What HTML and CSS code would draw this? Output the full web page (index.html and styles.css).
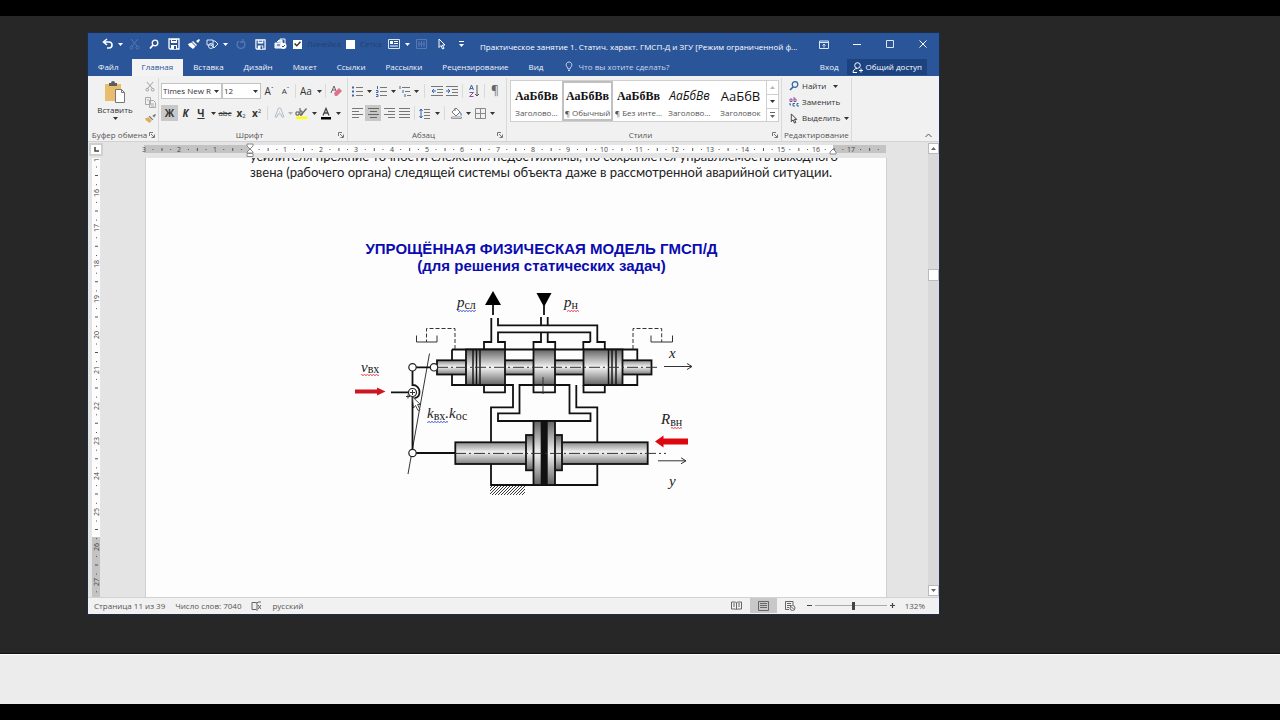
FILE: index.html
```html
<!DOCTYPE html>
<html lang="ru">
<head>
<meta charset="utf-8">
<title>Практическое занятие 1</title>
<link rel="stylesheet" href="styles.css">
</head>
<body>
<svg class="defs" aria-hidden="true">
  <symbol id="caret" viewBox="0 0 5 3"><path d="M0 0h5L2.500 3z" fill="currentColor"/></symbol>
  <symbol id="save" viewBox="0 0 12 12"><path d="M1 1h10v10H2L1 10z" fill="none" stroke="currentColor" stroke-width="1.300"/><path d="M3 1h6v4H3zM3 7h6v4H3z" fill="currentColor"/><path d="M4 2h4v1H4zM6 8h2v3H6z" fill="#2b5599"/></symbol>
  <symbol id="brush" viewBox="0 0 12 12"><path d="M8 3l3-2 1 1-2 3z" fill="currentColor"/><path d="M5 3l4 4-1 1-4-4z" fill="currentColor"/><path d="M3.500 4.500l4 4L5 11 1 8 0 6z" fill="var(--bristle, currentColor)"/></symbol>
  <symbol id="launcher" viewBox="0 0 6 6"><path d="M.5 4V.5H4M2 2l3 3M5.500 2.500v3h-3" fill="none" stroke="#777"/></symbol>
  <symbol id="pointer" viewBox="0 0 8 12"><path d="M1 1v8.500l2-2 1.500 3.500 1.500-.7L4.500 7H7z" fill="var(--fill, none)" stroke="currentColor"/></symbol>
</svg>

<main class="desktop">
<section class="window">

<header class="titlebar">
  <div class="quick">
    <button aria-label="Отменить"><svg width="12" height="12" viewBox="0 0 12 12"><path d="M5 1L1.500 4 5 7M2 4h5a3 3 0 0 1 0 6H5" fill="none" stroke="#fff" stroke-width="1.600"/></svg></button>
    <button aria-label="Список отмен"><svg class="caret"><use href="#caret"/></svg></button>
    <button class="faint" aria-label="Вырезать"><svg width="11" height="12" viewBox="0 0 11 12"><path d="M2 1l6 7M9 1L3 8" fill="none" stroke="currentColor"/><circle cx="2.500" cy="9.500" r="1.500" fill="none" stroke="currentColor"/><circle cx="8.500" cy="9.500" r="1.500" fill="none" stroke="currentColor"/></svg></button>
    <button aria-label="Найти"><svg width="10" height="11" viewBox="0 0 10 11"><circle cx="6" cy="4" r="2.800" fill="none" stroke="#fff" stroke-width="1.300"/><path d="M4 6L1 9.500" stroke="#fff" stroke-width="1.800"/></svg></button>
    <button aria-label="Сохранить как"><svg width="12" height="12"><use href="#save"/></svg></button>
    <button aria-label="Формат по образцу"><svg width="12" height="12"><use href="#brush"/></svg></button>
    <button aria-label="Фигуры"><svg width="13" height="12" viewBox="0 0 13 12"><path d="M1 2h6v5H1zM7 3h2l3 3-4 4-3-3" fill="none" stroke="#dbe4f2"/><circle cx="5" cy="8" r="2.500" fill="none" stroke="#dbe4f2"/></svg></button>
    <button aria-label="Список фигур"><svg class="caret"><use href="#caret"/></svg></button>
    <button class="faint" aria-label="Повторить"><svg width="11" height="11" viewBox="0 0 11 11"><path d="M8 2a4 4 0 1 1-4 0M8 0v3H5" fill="none" stroke="currentColor" stroke-width="1.300"/></svg></button>
    <button aria-label="Сохранить"><svg width="11" height="11"><use href="#save"/></svg></button>
    <button aria-label="Печать"><svg width="13" height="12" viewBox="0 0 13 12"><path d="M3 4l2-2h3v3M1 5h8v5H1z" fill="#dbe4f2" stroke="#fff"/><path d="M6 1h5v5" fill="none" stroke="#fff"/><circle cx="9.500" cy="8" r="3" fill="#fff"/><path d="M8 8l1 1 2-2M3 7h3" fill="none" stroke="#2b5599"/></svg></button>
    <label><input type="checkbox" checked>Линейка</label>
    <label><input type="checkbox">Сетка</label>
    <button aria-label="Форма"><svg width="12" height="10" viewBox="0 0 12 10"><path d="M.5.5h11v9H.5z" fill="none" stroke="#dbe4f2"/><path d="M2 2h3v3H2z" fill="#fff"/><path d="M6 2.500h4M6 4.500h4M2 7h8" stroke="#fff"/></svg></button>
    <button aria-label="Список форм"><svg class="caret"><use href="#caret"/></svg></button>
    <button class="faint" aria-label="Таблица"><svg width="11" height="10" viewBox="0 0 11 10"><path d="M.5.5h10v9H.5zM3 2v6M5.500 2v6M8 2v6M2 5h7" fill="none" stroke="currentColor"/></svg></button>
    <button aria-label="Выбор объектов"><svg width="8" height="12"><use href="#pointer"/></svg></button>
    <button aria-label="Настройка панели"><svg width="5" height="6" viewBox="0 0 5 6"><path d="M0 .5h5" stroke="#fff"/><path d="M0 3h5L2.500 6z" fill="#fff"/></svg></button>
  </div>
  <h1 class="caption">Практическое занятие 1. Статич. характ. ГМСП-Д и ЗГУ [Режим ограниченной ф...</h1>
  <div class="controls">
    <button aria-label="Параметры ленты"><svg width="10" height="9" viewBox="0 0 10 9"><path d="M.5 1h9v7.500h-9zM.5 2.500h9M5 7.500V4M3.500 5.500L5 4l1.500 1.500" fill="none" stroke="#dbe4f2"/></svg></button>
    <button aria-label="Свернуть"><svg width="8" height="8" viewBox="0 0 8 8"><path d="M0 4.500h8" stroke="#fff"/></svg></button>
    <button aria-label="Развернуть"><svg width="8" height="8" viewBox="0 0 8 8"><path d="M.5.5h7v7h-7z" fill="none" stroke="#dbe4f2"/></svg></button>
    <button aria-label="Закрыть"><svg width="8" height="8" viewBox="0 0 8 8"><path d="M.5.5l7 7M7.500.5l-7 7" stroke="#fff"/></svg></button>
  </div>
</header>

<nav class="tabs">
  <button class="file">Файл</button><button class="active">Главная</button><button>Вставка</button><button>Дизайн</button><button>Макет</button><button>Ссылки</button><button>Рассылки</button><button>Рецензирование</button><button>Вид</button>
  <button class="tell"><svg width="8" height="11" viewBox="0 0 8 11"><path d="M3 8V7C0 5 1 1 4 1s4 4 1 6v1zM3 9.500h2" fill="none" stroke="#c9d6ea"/></svg>Что вы хотите сделать?</button>
  <button class="login">Вход</button>
  <button class="share"><svg width="11" height="11" viewBox="0 0 11 11"><circle cx="5.500" cy="3.500" r="2.800" fill="none" stroke="#fff"/><path d="M1 10.500C1 8 3 6.500 5 6.500M7 8.500h4M9 6.500v4M1 10.500h4" fill="none" stroke="#fff"/></svg>Общий доступ</button>
</nav>

<div class="ribbon">
  <section class="group clipboard">
    <div class="body">
      <button class="paste"><svg width="22" height="22" viewBox="0 0 22 22"><path d="M1 3h16v17H1z" fill="#e9bd6e"/><path d="M5 2h2a2 2 0 0 1 4 0h2v3H5z" fill="#5d5d5d"/><path d="M11.500 8.500h6l3 3v10h-9z" fill="#fff" stroke="#777"/><path d="M17.500 8.500v3h3" fill="none" stroke="#777"/></svg>Вставить<svg class="caret"><use href="#caret"/></svg></button>
      <div class="stack">
        <button aria-label="Вырезать"><svg width="10" height="11" viewBox="0 0 11 12"><path d="M2 1l6 7M9 1L3 8" fill="none" stroke="#999"/><circle cx="2.500" cy="9.500" r="1.500" fill="none" stroke="#999"/><circle cx="8.500" cy="9.500" r="1.500" fill="none" stroke="#999"/></svg></button>
        <button aria-label="Копировать"><svg width="11" height="11" viewBox="0 0 11 11"><path d="M.5.5h5v7h-5zM4.500 3.500h4l2 2v5h-6zM6 7h3M6 9h3M2 3h2" fill="#f1f1f1" stroke="#aaa"/></svg></button>
        <button class="format" aria-label="Формат по образцу"><svg width="11" height="11"><use href="#brush"/></svg></button>
      </div>
    </div>
    <footer><span>Буфер обмена</span><svg width="6" height="6"><use href="#launcher"/></svg></footer>
  </section>

  <section class="group font">
    <div class="body rows">
      <div class="row font-top">
        <label class="combo"><select aria-label="Шрифт"><option>Times New R</option></select><svg class="caret"><use href="#caret"/></svg></label>
        <label class="combo"><select aria-label="Размер"><option>12</option></select><svg class="caret"><use href="#caret"/></svg></label>
        <button class="big">A<sup>ˆ</sup></button>
        <button>A<sup>ˇ</sup></button>
        <i></i>
        <button class="big">Aa</button>
        <button aria-label="Регистр"><svg class="caret"><use href="#caret"/></svg></button>
        <i></i>
        <button aria-label="Очистить"><svg width="12" height="12" viewBox="0 0 12 12"><path d="M1 8L4 1l2 5M2 5h4" fill="none" stroke="#666"/><path d="M4 8l5-5 3 3-5 5H5z" fill="#e0708c"/></svg></button>
      </div>
      <div class="row font-bottom">
        <button class="on big"><b>Ж</b></button><button class="big"><b><em>К</em></b></button><button class="big"><b><u>Ч</u></b></button>
        <button aria-label="Подчёркивание"><svg class="caret"><use href="#caret"/></svg></button>
        <button><s>abc</s></button><button class="big"><b>x</b><sub>2</sub></button><button class="big"><b>x</b><sup>2</sup></button>
        <i></i>
        <button aria-label="Эффекты"><svg width="11" height="12" viewBox="0 0 11 12"><path d="M1 10L4.500 1h2L10 10H8L7 7H4l-1 3zM5 5h1" fill="none" stroke="#b3bdc9"/></svg></button>
        <button class="dim" aria-label="Список эффектов"><svg class="caret"><use href="#caret"/></svg></button>
        <button aria-label="Выделение цветом"><svg width="13" height="13" viewBox="0 0 13 13"><path d="M1 5h3v3H1zM5 1v7h2V4H5" fill="none" stroke="#555"/><path d="M11 1L6 7l-1 2 2-1 5-6z" fill="#666"/><path d="M1 9.500h11V12H1z" fill="#ff0"/></svg></button>
        <button aria-label="Цвет выделения"><svg class="caret"><use href="#caret"/></svg></button>
        <button aria-label="Цвет текста"><svg width="12" height="13" viewBox="0 0 12 13"><path d="M3 8.500L6 1.500l3 7M4 6h4" fill="none" stroke="#444" stroke-width="1.300"/><path d="M1 10h10v2.500H1z" fill="#000"/></svg></button>
        <button aria-label="Список цветов"><svg class="caret"><use href="#caret"/></svg></button>
      </div>
    </div>
    <footer><span>Шрифт</span><svg width="6" height="6"><use href="#launcher"/></svg></footer>
  </section>

  <section class="group para">
    <div class="body rows">
      <div class="row para-top">
        <button aria-label="Маркеры"><svg width="11" height="11" viewBox="0 0 11 11"><path d="M4 1.500h7M4 5.500h7M4 9.500h7" stroke="#777"/><path d="M0 1.500h2M0 5.500h2M0 9.500h2" stroke="#3f66a8" stroke-width="2"/></svg></button>
        <button aria-label="Список маркеров"><svg class="caret"><use href="#caret"/></svg></button>
        <button aria-label="Нумерация"><svg width="11" height="11" viewBox="0 0 11 11"><path d="M4 1.500h7M4 5.500h7M4 9.500h7" stroke="#777"/><path d="M1.500 0v3M0 4.500h2v2H0M0 8.500h2v2H0" fill="none" stroke="#3f66a8"/></svg></button>
        <button aria-label="Список номеров"><svg class="caret"><use href="#caret"/></svg></button>
        <button aria-label="Многоуровневый список"><svg width="12" height="11" viewBox="0 0 12 11"><path d="M3 1.500h8M6 5.500h5M8 9.500h4" stroke="#777"/><path d="M1 0v3M4 4v3M6 8v3" stroke="#3f66a8"/></svg></button>
        <button aria-label="Уровни"><svg class="caret"><use href="#caret"/></svg></button>
        <i></i>
        <button aria-label="Уменьшить отступ"><svg width="12" height="10" viewBox="0 0 12 10"><path d="M0 .5h12M6 3.500h6M6 6.500h6M0 9.500h12" stroke="#777"/><path d="M5 5H1M3 3L1 5l2 2" fill="none" stroke="#2f63b4"/></svg></button>
        <button aria-label="Увеличить отступ"><svg width="12" height="10" viewBox="0 0 12 10"><path d="M0 .5h12M6 3.500h6M6 6.500h6M0 9.500h12" stroke="#777"/><path d="M0 5h4M2 3l2 2-2 2" fill="none" stroke="#2f63b4"/></svg></button>
        <i></i>
        <button aria-label="Сортировка"><svg width="10" height="12" viewBox="0 0 10 12"><path d="M.5 5L2.500 0l2 5M1 3.500h3" fill="none" stroke="#3f66a8"/><path d="M.5 7.500h4l-4 4h4" fill="none" stroke="#8c4fa0"/><path d="M8 0v11M6 9l2 2 2-2" fill="none" stroke="#555"/></svg></button>
        <i></i>
        <button class="pilcrow">¶</button>
      </div>
      <div class="row para-bottom">
        <button aria-label="По левому краю"><svg width="11" height="10" viewBox="0 0 11 10"><path d="M0 .5h11M0 3.500h7M0 6.500h11M0 9.500h7" stroke="#777"/></svg></button>
        <button class="on" aria-label="По центру"><svg width="11" height="10" viewBox="0 0 11 10"><path d="M0 .5h11M2 3.500h7M0 6.500h11M2 9.500h7" stroke="#666"/></svg></button>
        <button aria-label="По правому краю"><svg width="11" height="10" viewBox="0 0 11 10"><path d="M0 .5h11M4 3.500h7M0 6.500h11M4 9.500h7" stroke="#777"/></svg></button>
        <button aria-label="По ширине"><svg width="11" height="10" viewBox="0 0 11 10"><path d="M0 .5h11M0 3.500h11M0 6.500h11M0 9.500h11" stroke="#777"/></svg></button>
        <i></i>
        <button aria-label="Интервал"><svg width="12" height="11" viewBox="0 0 12 11"><path d="M5 1.500h6M5 4.500h6M5 7.500h6M5 10.500h6" stroke="#777"/><path d="M2 1v9M.5 3L2 1l1.500 2M.5 8L2 10l1.500-2" fill="none" stroke="#2f63b4"/></svg></button>
        <button aria-label="Список интервалов"><svg class="caret"><use href="#caret"/></svg></button>
        <i></i>
        <button aria-label="Заливка"><svg width="13" height="12" viewBox="0 0 13 12"><path d="M2 5l4-4 4 4-4 4zM5 4V1" fill="#fff" stroke="#777"/><path d="M10 5c2 1 2 3 1 4z" fill="#2f63b4"/><path d="M1.500 10h10v1.500h-10z" fill="#fff" stroke="#999"/></svg></button>
        <button aria-label="Цвет заливки"><svg class="caret"><use href="#caret"/></svg></button>
        <button aria-label="Границы"><svg width="11" height="11" viewBox="0 0 11 11"><path d="M.5.5h10v10H.5zM5.500.5v10M.5 5.500h10" fill="none" stroke="#888"/></svg></button>
        <button aria-label="Список границ"><svg class="caret"><use href="#caret"/></svg></button>
      </div>
    </div>
    <footer><span>Абзац</span><svg width="6" height="6"><use href="#launcher"/></svg></footer>
  </section>

  <section class="group styles">
    <div class="body">
      <div class="gallery">
        <button><span class="serif">АаБбВв</span>Заголово...</button>
        <button class="chosen"><span class="serif">АаБбВв</span>¶ Обычный</button>
        <button><span class="serif">АаБбВв</span>¶ Без инте...</button>
        <button><span class="slant">АаБбВв</span>Заголово...</button>
        <button><span>АаБбВ</span>Заголовок</button>
        <div class="scroller">
          <button class="dim" aria-label="Вверх"><svg class="caret up"><use href="#caret"/></svg></button>
          <button aria-label="Вниз"><svg class="caret"><use href="#caret"/></svg></button>
          <button aria-label="Все стили"><svg width="5" height="6" viewBox="0 0 5 6"><path d="M0 .5h5" stroke="#666"/><path d="M0 3h5L2.500 6z" fill="#666"/></svg></button>
        </div>
      </div>
    </div>
    <footer><span>Стили</span><svg width="6" height="6"><use href="#launcher"/></svg></footer>
  </section>

  <section class="group editing">
    <div class="body">
      <button><svg width="10" height="10" viewBox="0 0 10 10"><circle cx="6" cy="3.500" r="2.800" fill="none" stroke="#2f63a0" stroke-width="1.200"/><path d="M4 6L1 9" stroke="#2f63a0" stroke-width="1.600"/></svg>Найти<svg class="caret far"><use href="#caret"/></svg></button>
      <button><svg width="10" height="10" viewBox="0 0 10 10"><path d="M1 2h2v2.500H1zM5 0v4.500h2V2H5" fill="none" stroke="#8c4fa0"/><path d="M6 6.500H4v2.500h2M9.500 6.500H8v2.500h2M1 6v2h1" fill="none" stroke="#2f63a0"/></svg>Заменить</button>
      <button><svg width="10" height="11" viewBox="-1 0 10 12"><use href="#pointer" width="8" height="12"/></svg>Выделить<svg class="caret"><use href="#caret"/></svg></button>
    </div>
    <footer><span>Редактирование</span></footer>
  </section>
  <button class="collapse" aria-label="Свернуть ленту"><svg width="7" height="5" viewBox="0 0 7 5"><path d="M.5 4l3-3 3 3" fill="none" stroke="#555"/></svg></button>
</div>

<div class="workspace">
  <div class="left-bar">
    <div class="tabstop"><svg width="5" height="5" viewBox="0 0 5 5"><path d="M1 0v4h4" fill="none" stroke="#444" stroke-width="1.500"/></svg></div>
    <svg class="vruler" width="8">
      <rect width="8" height="100%" fill="#c3c3c3"/><rect width="8" height="379" fill="#fdfdfd"/>
      <path d="M4.500 8.500V442" stroke="#555" stroke-width="1" stroke-dasharray="1 16.700"/>
      <path d="M4.500 17V442" stroke="#555" stroke-width="3" stroke-dasharray="1 34.400"/>
      <g class="num">
        <text transform="translate(7 0) rotate(-90)">15</text><text transform="translate(7 35) rotate(-90)">16</text><text transform="translate(7 70) rotate(-90)">17</text><text transform="translate(7 106) rotate(-90)">18</text><text transform="translate(7 141) rotate(-90)">19</text><text transform="translate(7 177) rotate(-90)">20</text><text transform="translate(7 212) rotate(-90)">21</text><text transform="translate(7 248) rotate(-90)">22</text><text transform="translate(7 283) rotate(-90)">23</text><text transform="translate(7 318) rotate(-90)">24</text><text transform="translate(7 354) rotate(-90)">25</text><text transform="translate(7 389) rotate(-90)">26</text><text transform="translate(7 424) rotate(-90)">27</text>
      </g>
    </svg>
  </div>
  <div class="canvas">
    <svg class="hruler" height="16">
      <g transform="translate(-1 3)">
      <rect width="742" height="8" fill="#c3c3c3"/><rect x="106" width="583" height="8" fill="#fdfdfd"/>
      <path d="M8.500 4.500H738" stroke="#555" stroke-width="1" stroke-dasharray="1 16.690"/>
      <path d="M17.500 4.500H738" stroke="#555" stroke-width="3" stroke-dasharray="1 34.380"/>
      <g class="num">
        <text x="0" y="7">3</text><text x="35" y="7">2</text><text x="71" y="7">1</text><text x="141" y="7">1</text><text x="177" y="7">2</text><text x="212" y="7">3</text><text x="248" y="7">4</text><text x="283" y="7">5</text><text x="318" y="7">6</text><text x="354" y="7">7</text><text x="389" y="7">8</text><text x="424" y="7">9</text><text x="460" y="7">10</text><text x="495" y="7">11</text><text x="531" y="7">12</text><text x="566" y="7">13</text><text x="601" y="7">14</text><text x="637" y="7">15</text><text x="672" y="7">16</text><text x="707" y="7">17</text>
      </g>
      <path d="M103-1h6v2l-3 3-3-3zM106 4l3 3v1h-6V7zM103 8.500h6v3h-6zM689 4l3 3v2h-6V7z" fill="#fff" stroke="#888"/>
      </g>
    </svg>
    <article class="page">
      <p class="line">усилителя прежние точности слежения недостижимы, но сохраняется управляемость выходного</p>
      <p>звена (рабочего органа) следящей системы объекта даже в рассмотренной аварийной ситуации.</p>
      <h2>УПРОЩЁННАЯ ФИЗИЧЕСКАЯ МОДЕЛЬ ГМСП/Д<br>(для решения статических задач)</h2>
      <svg class="scheme" viewBox="250 284 583 220">
        <defs>
          <linearGradient id="land" x2="0" y2="1"><stop offset="0" stop-color="#636363"/><stop offset=".5" stop-color="#f4f4f4"/><stop offset="1" stop-color="#636363"/></linearGradient>
          <linearGradient id="rod" x2="0" y2="1"><stop offset="0" stop-color="#8a8a8a"/><stop offset=".45" stop-color="#f2f2f2"/><stop offset="1" stop-color="#7d7d7d"/></linearGradient>
          <pattern id="hatch" width="3" height="3" patternUnits="userSpaceOnUse"><path d="M0 3L3 0M-1 1l2-2M2 4l2-2" stroke="#222" stroke-width=".9"/></pattern>
          <pattern id="red" width="3" height="2" patternUnits="userSpaceOnUse"><path d="M0 1.500L1.500 .5 3 1.500" fill="none" stroke="#e23b4a"/></pattern>
          <pattern id="blue" width="3" height="2" patternUnits="userSpaceOnUse"><path d="M0 1.500L1.500 .5 3 1.500" fill="none" stroke="#4350d6"/></pattern>
        </defs>
        <path d="M493 291l8 14h-16zM544 307l-7.500-14h15z"/>
        <g class="ink">
          <path d="M493 305v10M544 305v10"/>
          <path d="M491.300 318v24H484v7.500M498 318v7.300h99.300V342h7.500v7.500M590.300 342h-7v7.500M590.300 342v-9.700H498V342h7v7.500M541 317v8M547.700 317v8M541 332v10h-7.500v7.500M547.700 332v10h7.500v7.500"/>
          <path d="M452 349.500h185.300V385H583.500M452 349.500V385h61v22.300h-22V485h106.300v-77.700h-21V385M533.500 385h-14v28.300H498V421h92.500v-7.700h-21V385H555"/>
          <path d="M484 385v7.300h21V385M533.500 385v7.300H555V385M583.500 385v7.300h21.300V385"/>
          <g fill="url(#rod)"><rect x="437" y="360.300" width="214.500" height="14.200"/><rect x="455.300" y="442.300" width="192.400" height="21.700"/></g>
          <g fill="url(#land)"><rect x="466" y="349.500" width="39" height="35.500"/><rect x="533.500" y="349.500" width="21.500" height="35.500"/><rect x="583.500" y="349.500" width="39" height="35.500"/><rect x="526" y="435" width="36" height="35.300"/><rect x="533.500" y="421" width="21.500" height="64"/></g>
          <path d="M473 350v35M476.500 350v35M608.500 350v35M612 350v35M616 350v35M480 350v35" stroke-width="1.400"/>
          <path d="M544.200 421v64" class="seal"/>
        </g>
        <path class="thin" d="M437 367.300h220M455 453.400h211" stroke-dasharray="11 3 2 3"/>
        <path class="thin" d="M455 349v-20.500h-28.500V342M633 349v-20.500h28.700V342" stroke-dasharray="4 2"/>
        <path class="thin" d="M416.500 335.500v6.500H437v-6.500M651 335.500v6.500h21.500v-6.500M429.500 353.500L408 474M543 377v17"/>
        <path class="thin" d="M664 366.500h28M687 363.500l5 3-5 3M658 460.800h28M681 457.800l5 3-5 3"/>
        <path d="M490 486h35v9h-35z" fill="url(#hatch)"/>
        <g class="ink"><path d="M412.500 367.300H434M412.500 370v15c9 0 9 13 2 13M391 392.300h18M412.500 397v56H455"/></g>
        <g fill="#fff" stroke="#222" stroke-width="1.200"><circle cx="412.500" cy="367.300" r="3.700"/><circle cx="434" cy="367.300" r="3.700"/><circle cx="412.500" cy="392.500" r="4"/><circle cx="412.500" cy="453" r="3.700"/>
        <path d="M412.500 397l1 11 2-2.500 2.500 5 2-1-2.500-5h3z" stroke-width=".8"/></g>
        <path class="thin" d="M410 392.500h5M412.500 390v5M406 396.500h4M408 394.500v4"/>
        <path d="M355 389.500h22v-2l8.500 4-8.500 4v-2h-22z" fill="#cb1724"/>
        <path d="M688 438.500h-24.500v-3L655 441.500l8.500 6v-3H688z" fill="#dd0710"/>
        <g class="math">
          <text x="457" y="307"><tspan>p</tspan><tspan class="sub" dy="2">сл</tspan></text>
          <text x="564" y="307"><tspan>p</tspan><tspan class="sub" dy="2">н</tspan></text>
          <text x="361" y="372"><tspan>v</tspan><tspan class="sub" dy="1">вх</tspan></text>
          <text x="427" y="418"><tspan>k</tspan><tspan class="sub" dy="2">вх</tspan><tspan dy="-2">.k</tspan><tspan class="sub" dy="2">ос</tspan></text>
          <text x="661" y="424"><tspan>R</tspan><tspan class="sub" dy="2">вн</tspan></text>
          <text x="669" y="358">x</text><text x="669" y="486">y</text>
        </g>
        <path d="M457 310h19v2h-19zM427 421h21v2h-21z" fill="url(#blue)"/>
        <path d="M567 310h12v2h-12zM361 374h18v2h-18zM671 427h11v2h-11z" fill="url(#red)"/>
      </svg>
    </article>
  </div>
  <div class="scrollbar">
    <button aria-label="Вверх"><svg class="caret up"><use href="#caret"/></svg></button>
    <div class="thumb"></div>
    <button aria-label="Вниз"><svg class="caret"><use href="#caret"/></svg></button>
  </div>
</div>

<footer class="status">
  <span>Страница 11 из 39</span><span>Число слов: 7040</span>
  <svg width="11" height="10" viewBox="0 0 11 10"><path d="M5 1.500H1v7h4l1 1V2zM6 2l1-1h3M7 4l3 4M10 4L7 8" fill="none" stroke="#666"/></svg>
  <span class="lang">русский</span>
  <button class="view first" aria-label="Режим чтения"><svg width="11" height="9" viewBox="0 0 11 9"><path d="M.5 1h4l1 1 1-1h4v7h-4l-1 1-1-1h-4zM5.500 2v6M2 3h2M2 5h2M7 3h2M7 5h2" fill="none" stroke="#666"/></svg></button>
  <button class="view on" aria-label="Разметка страницы"><svg width="11" height="10" viewBox="0 0 11 10"><path d="M.5.5h10v9H.5zM2 2.500h7M2 4.500h7M2 6.500h7" fill="none" stroke="#666"/></svg></button>
  <button class="view" aria-label="Веб-документ"><svg width="11" height="10" viewBox="0 0 11 10"><path d="M8 4V.5H.5v8H4M2 2.500h4M2 4.500h4M2 6.500h2" fill="none" stroke="#666"/><circle cx="7.500" cy="7" r="2.500" fill="none" stroke="#666"/><path d="M6 5.500l3 3" stroke="#666"/></svg></button>
  <div class="zoom"><button aria-label="Мельче"><svg width="5" height="5" viewBox="0 0 5 5"><path d="M0 2.500h5" stroke="#444"/></svg></button><input type="range" min="0" max="100" value="54" aria-label="Масштаб"><button aria-label="Крупнее"><svg width="5" height="5" viewBox="0 0 5 5"><path d="M0 2.500h5M2.500 0v5" stroke="#444" stroke-width="1.200"/></svg></button></div>
  <span class="percent">132%</span>
</footer>
</section>
</main>
<div class="tray"></div>
</body>
</html>
```
FILE: styles.css
```css
* { box-sizing: border-box; }
body { margin: 0; min-height: 100vh; padding: 16px 0; background: #000; display: flex; flex-direction: column; font: 8px/12px "Open Sans", "Noto Sans", sans-serif; color: #333; }
button { border: 0; padding: 0; margin: 0; background: none; font: inherit; color: inherit; display: flex; align-items: center; justify-content: center; white-space: nowrap; }
h1, h2, p { margin: 0; font: inherit; }
svg { flex: none; display: block; }
.defs { position: absolute; width: 0; height: 0; }
.caret { width: 5px; height: 3px; }
.caret.up { transform: rotate(180deg); }
.dim { color: #b5b5b5; }

.desktop { flex: 1; display: flex; background: #272727; padding: 17px 341px 39px 88px; border-bottom: 1px solid #111; }
.tray { height: 50px; background: #ececec; border-top: 1px solid #fff; }
.window { flex: 1; min-width: 0; display: flex; flex-direction: column; background: #e4e4e4; box-shadow: 0 0 0 1px #1c2c4a; }

.titlebar { height: 26px; display: flex; background: #2b5599; color: #fff; padding: 0 0 4px 12px; }
.quick { display: grid; grid-template-columns: 16px 8px 20px 20px 20px 20px 17px 9px 20px 20px 20px 53px 42px 18px 8px 20px 21px 19px; align-items: center; }
.quick .faint { color: #5579b0; }
.quick label { display: flex; align-items: center; gap: 5px; padding-left: 3px; color: #24406f; }
.quick input { appearance: none; width: 9px; height: 9px; margin: 0; background: #fff; display: flex; flex: none; }
.quick input:checked::before { content: ""; flex: 1; margin: 1px; background: #333; clip-path: polygon(0 50%, 15% 35%, 40% 60%, 85% 10%, 100% 25%, 40% 90%); }
.caption { flex: 1; min-width: 0; padding: 4px 0 0 9px; line-height: 19px; white-space: nowrap; overflow: hidden; }
.controls { display: grid; grid-template-columns: repeat(4, 33px); }

.tabs { height: 17px; display: flex; background: #2b5599; color: #f0f4fa; }
.tabs button { padding: 0 10px 2px; }
.tabs .file { padding-right: 14px; }
.tabs .active { background: #f3f3f3; color: #2b5599; padding-left: 9px; }
.tabs .tell { gap: 5px; padding-left: 12px; color: #c9d6ea; }
.tabs .login { margin-left: auto; padding: 0 8px 2px; }
.tabs .share { background: #1c4280; padding: 0 5px; gap: 3px; margin: 0 12px 1px 0; color: #fff; }

.ribbon { height: 66px; display: flex; background: #f1f1f1; border-bottom: 1px solid #d2d2d2; }
.group { display: flex; flex-direction: column; margin: 2px 0 0; border-right: 1px solid #d9d9d9; }
.group .body { flex: 1; display: flex; }
.group footer { height: 12px; display: flex; align-items: center; color: #555; padding: 0 3px 0 2px; }
.group footer span { flex: 1; text-align: center; }
.clipboard { width: 71px; }
.font { width: 189px; }
.para { width: 159px; }
.styles { width: 275px; }
.editing { width: 70px; }
.paste { flex-direction: column; width: 54px; padding-top: 3px; justify-content: flex-start; gap: 1px; }
.stack { display: grid; grid-template-rows: repeat(3, 16px); width: 16px; justify-content: center; }
.format { color: #777; --bristle: #dfae58; }
.group .rows { flex-direction: column; padding-top: 5px; gap: 6px; }
.row { display: grid; height: 16px; }
.row i { width: 1px; height: 14px; margin: 1px auto; background: #dadada; }
.font .rows { padding-left: 2px; }
.para .rows { padding-left: 1px; }
.font-top { grid-template-columns: 61px 39px 16px 17px 2px 20px 6px 6px 16px; }
.font-bottom { grid-template-columns: 17px 15px 16px 8px 16px 16px 15px 7px 16px 6px 17px 8px 16px 8px; }
.para-top { grid-template-columns: 16px 8px 17px 7px 16px 7px 9px 15px 15px 7px 15px 7px 14px; }
.para-bottom { grid-template-columns: 16px 16px 16px 15px 4px 18px 7px 7px 16px 8px 16px 8px; }
.combo { display: flex; align-items: center; background: #fff; border: 1px solid #c3c3c3; padding-right: 2px; }
.combo select { appearance: none; flex: 1; min-width: 0; border: 0; padding: 0 1px; background: none; font: inherit; color: #333; overflow: hidden; }
.on { background: #c8c8c8; }
.big { font-size: 10px; }
.pilcrow { font-size: 12px; color: #666; }
.row sup, .row sub { font-size: 6px; line-height: 6px; }
.row sup { align-self: flex-start; padding-top: 3px; }
.row sub { align-self: flex-end; padding-bottom: 2px; }

.styles .body { padding: 2px 4px 7px 3px; }
.gallery { flex: 1; display: grid; grid-template-columns: repeat(5, 51px) 12px; background: #fff; border: 1px solid #cfcfcf; }
.gallery > button { flex-direction: column; justify-content: flex-end; min-width: 0; overflow: hidden; gap: 4px; color: #555; border: 2px solid transparent; }
.gallery > .chosen { border-color: #c0c0c0; }
.gallery span { font-size: 13px; line-height: 14px; color: #111; white-space: nowrap; }
.gallery .serif { font: bold 12px/14px "Liberation Serif", serif; }
.gallery .slant { font-size: 12px; font-style: italic; }
.scroller { display: grid; grid-template-rows: repeat(3, 1fr); border-left: 1px solid #cfcfcf; }
.scroller button + button { border-top: 1px solid #cfcfcf; }
.editing .body { flex-direction: column; padding-left: 7px; }
.editing .body button { height: 16px; justify-content: flex-start; gap: 3px; }
.editing .far { margin-left: 4px; }
.collapse { margin: auto 7px 3px auto; }

.workspace { flex: 1; min-height: 0; display: flex; background: #e4e4e4; }
.left-bar { width: 16px; display: flex; flex-direction: column; }
.tabstop { height: 13px; width: 14px; margin: 1px 0 2px 1px; border: 2px solid #cfcfcf; background: #fff; display: flex; align-items: center; justify-content: center; }
.vruler { flex: 1; margin-left: 4px; min-height: 0; }
.num { font-size: 7px; fill: #444; text-anchor: middle; }
.canvas { flex: 1; min-width: 0; display: flex; flex-direction: column; margin: 0 41px; }
.hruler { width: 100%; overflow: visible; }
.page { flex: 1; min-height: 0; overflow: hidden; background: #fdfdfd; border: solid #cfcfcf; border-width: 0 1px; padding: 0 53px 0 104px; color: #222; }
.page p { font: 13px/16px Lato, "Open Sans", sans-serif; white-space: nowrap; }
.page .line { margin-top: -10px; text-align-last: justify; }
.page h2 { margin-top: 60px; font: bold 15px/17px "Liberation Sans", Arial, sans-serif; color: #0b0bb0; text-align: center; }
.scheme { width: 100%; margin-top: 10px; }
.ink { fill: none; stroke: #111; stroke-width: 1.8; }
.seal { stroke-width: 7; }
.thin { fill: none; stroke: #333; stroke-width: 1; }
.math { font: italic 15px "Liberation Serif", serif; fill: #222; }
.math .sub { font-size: 12px; font-style: normal; }

.scrollbar { width: 11px; display: flex; flex-direction: column; background: #d9d9d9; margin: 1px 0; }
.scrollbar button { height: 11px; background: #fff; border: 1px solid #bbb; color: #666; }
.scrollbar .thumb { height: 12px; margin: 115px 0 auto; background: #fff; border: 1px solid #bbb; }

.status { height: 17px; display: flex; align-items: center; background: #f1f1f1; border-top: 1px solid #d2d2d2; padding: 0 14px 1px 6px; color: #555; gap: 10px; }
.status .lang { flex: 1; }
.status .view { width: 27px; height: 15px; margin-left: -10px; }
.zoom { display: flex; align-items: center; margin-left: -7px; gap: 3px; }
.zoom input { appearance: none; width: 72px; height: 9px; margin: 0; background: linear-gradient(#aaa, #aaa) center / 100% 1px no-repeat; }
.zoom input::-webkit-slider-thumb { appearance: none; width: 3px; height: 8px; background: #444; }
```
